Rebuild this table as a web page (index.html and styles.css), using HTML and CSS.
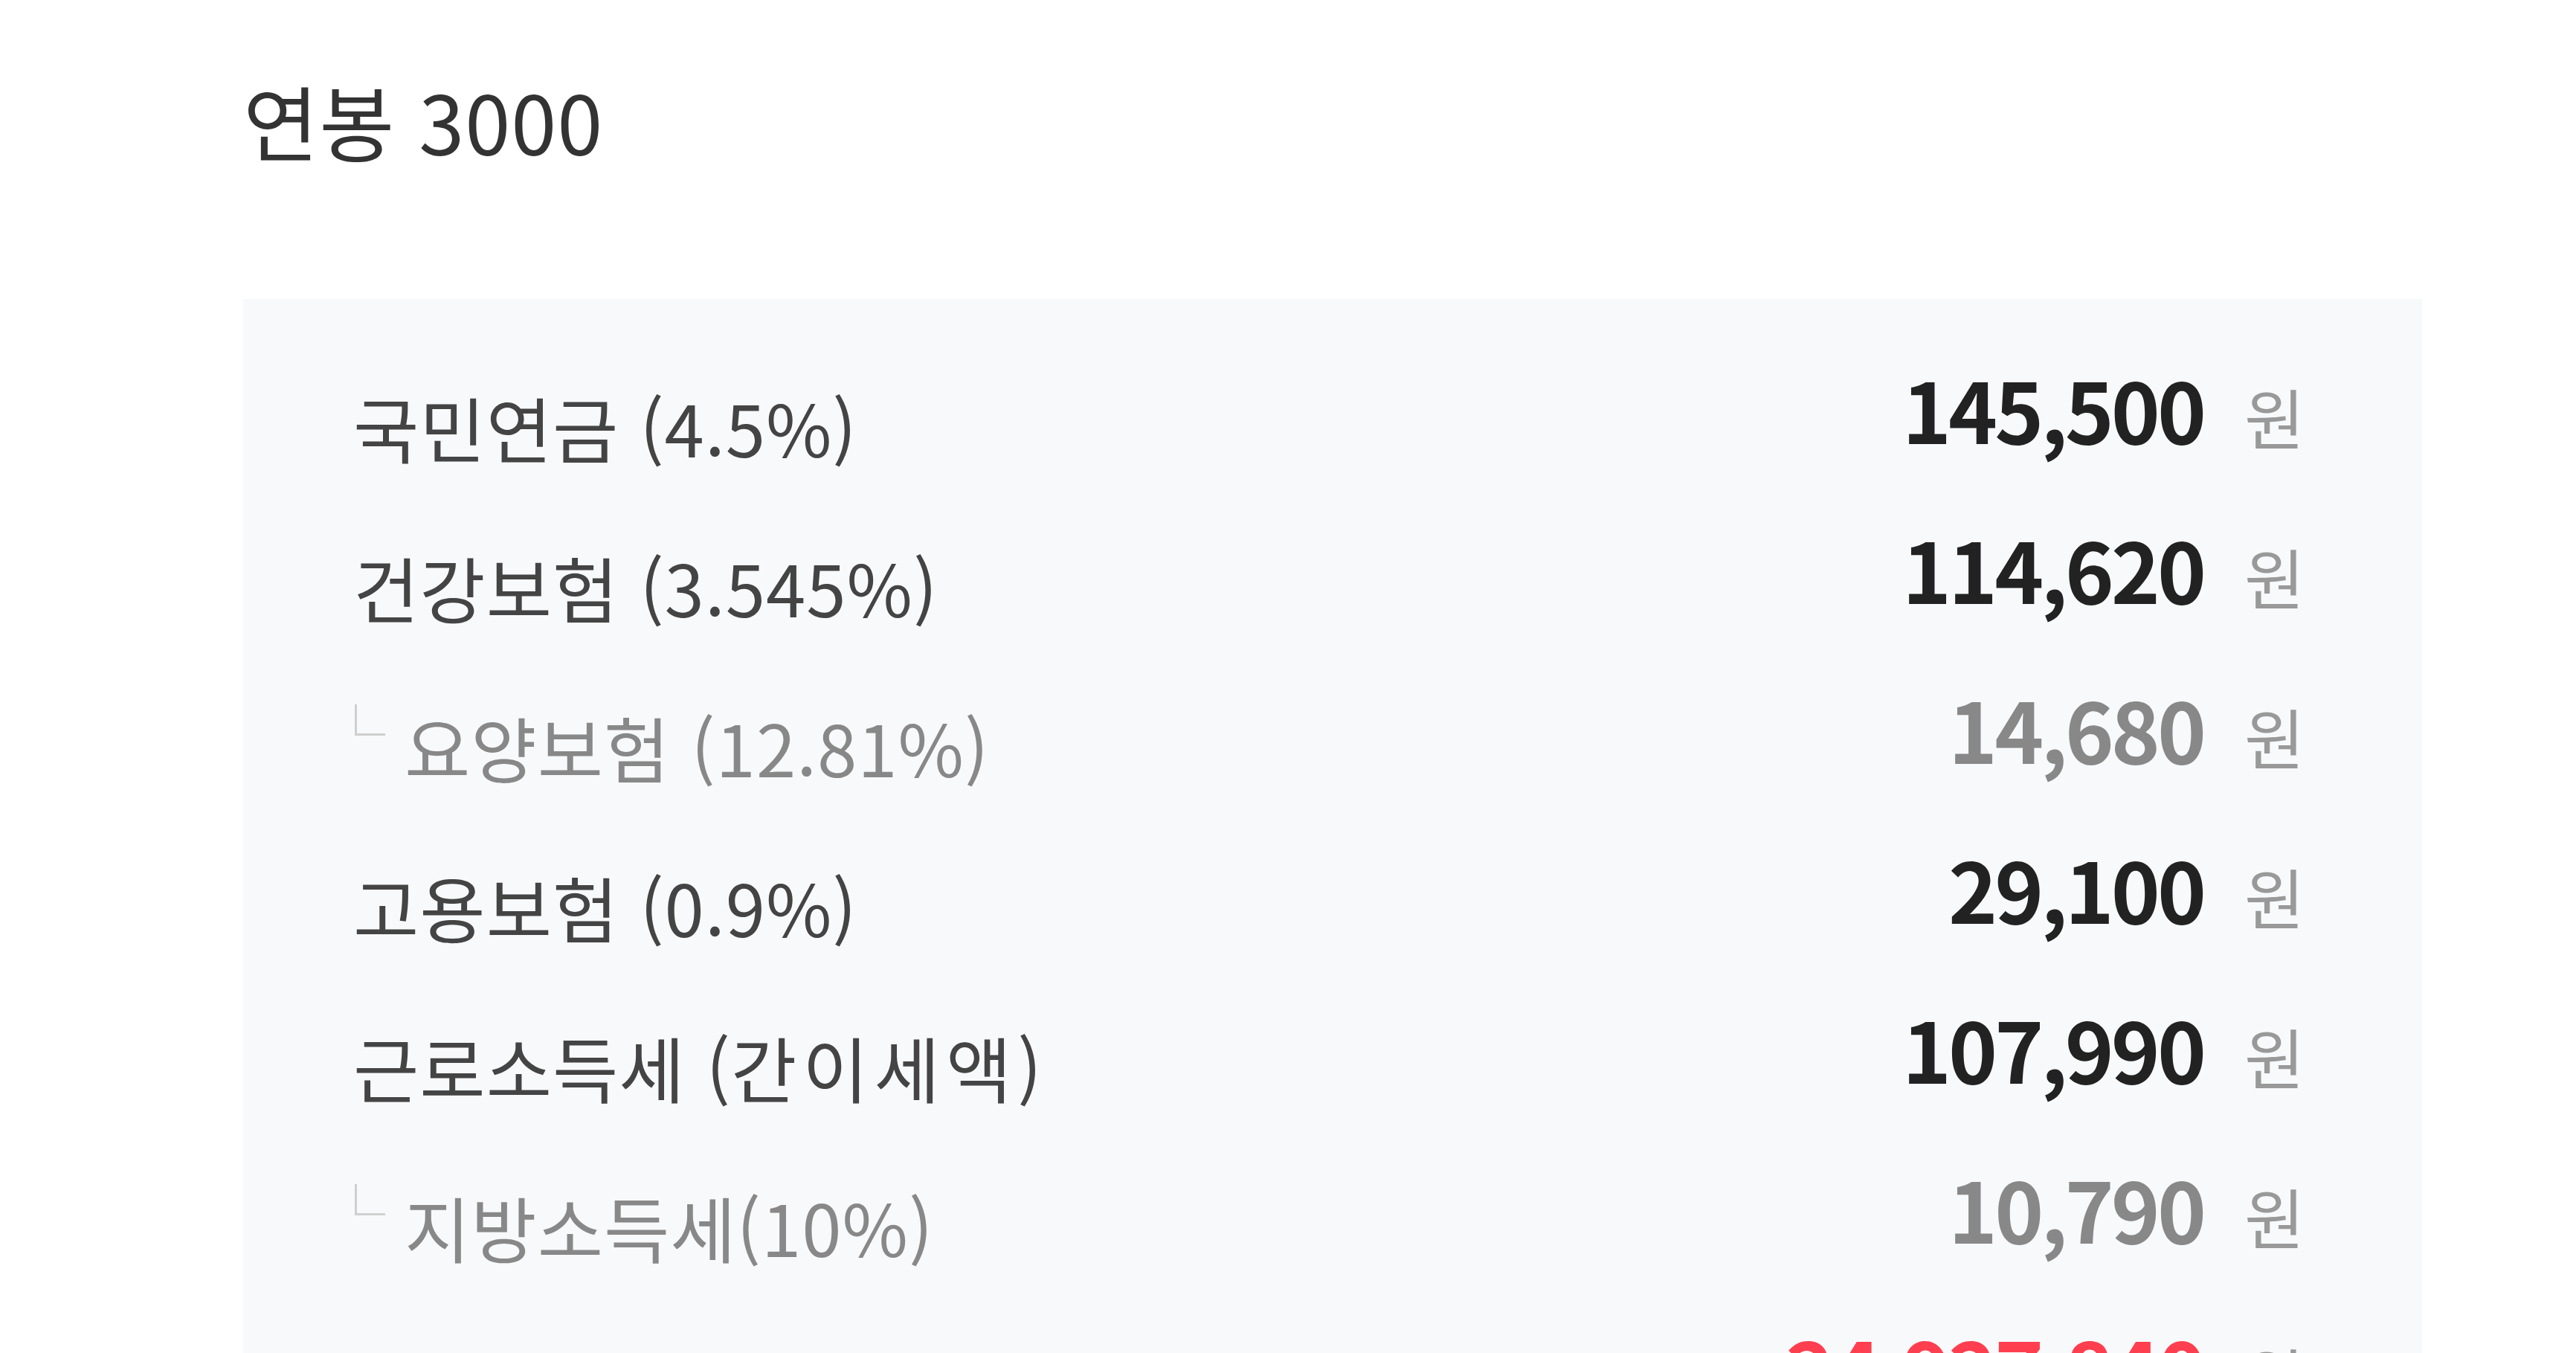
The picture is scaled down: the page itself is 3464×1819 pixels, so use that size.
FILE: index.html
```html
<!DOCTYPE html>
<html lang="ko">
<head>
    <meta charset="UTF-8">
    <meta name="viewport" content="width=device-width, initial-scale=1.0">
    <title>연봉 3000 - 실수령액</title>
    <link rel="stylesheet" href="styles.css">
</head>
<body>
    <div class="page">
        <h1 class="title">연봉 3000</h1>

        <div class="deduction-box">
            <div class="row">
                <span class="label">국민연금 (4.5%)</span>
                <span class="amount">145,500<span class="won">원</span></span>
            </div>
            <div class="row">
                <span class="label">건강보험 (3.545%)</span>
                <span class="amount">114,620<span class="won">원</span></span>
            </div>
            <div class="row sub">
                <span class="label"><span class="branch"></span>요양보험 (12.81%)</span>
                <span class="amount">14,680<span class="won">원</span></span>
            </div>
            <div class="row">
                <span class="label">고용보험 (0.9%)</span>
                <span class="amount">29,100<span class="won">원</span></span>
            </div>
            <div class="row">
                <span class="label">근로소득세 (<span class="wide">간이세액</span>)</span>
                <span class="amount">107,990<span class="won">원</span></span>
            </div>
            <div class="row sub">
                <span class="label"><span class="branch"></span>지방소득세(10%)</span>
                <span class="amount">10,790<span class="won">원</span></span>
            </div>
            <div class="row total">
                <span class="label">연 실수령액</span>
                <span class="amount">24,927,840<span class="won">원</span></span>
            </div>
        </div>
    </div>
</body>
</html>
```

FILE: styles.css
```css
body {
    margin: 0;
    background: #ffffff;
    font-family: "Noto Sans CJK KR", "Noto Sans", sans-serif;
}

.page {
    padding: 0 207px 0 327px;
}

.title {
    margin: 0;
    padding-top: 96px;
    font-size: 110px;
    font-weight: 400;
    line-height: 130px;
    letter-spacing: 1px;
    color: #333;
}

/* 공제 내역 박스 */
.deduction-box {
    margin-top: 176px;
    background: #f8f9fb;
    padding: 79px 158px 60px 148px;
}

.row {
    display: flex;
    justify-content: space-between;
    align-items: flex-start;
    height: 215px;
}

.label {
    margin-top: 36px;
    font-size: 96px;
    line-height: 114px;
    letter-spacing: 1px;
    color: #444;
    white-space: nowrap;
}

.label .wide {
    letter-spacing: 8px;
}

.amount {
    font-size: 112px;
    font-weight: 700;
    line-height: 134px;
    letter-spacing: -4px;
    color: #222;
    white-space: nowrap;
}

.won {
    margin-left: 55px;
    font-size: 88px;
    font-weight: 400;
    letter-spacing: 0;
    color: #999;
}

.sub .label,
.sub .amount {
    color: #888;
}

.branch {
    display: inline-block;
    width: 38px;
    height: 39px;
    margin: 0 26px 0 2px;
    border-left: 3px solid #cfcfcf;
    border-bottom: 3px solid #cfcfcf;
    vertical-align: 56px;
}

.total .amount {
    color: #ff3f4f;
}
```
